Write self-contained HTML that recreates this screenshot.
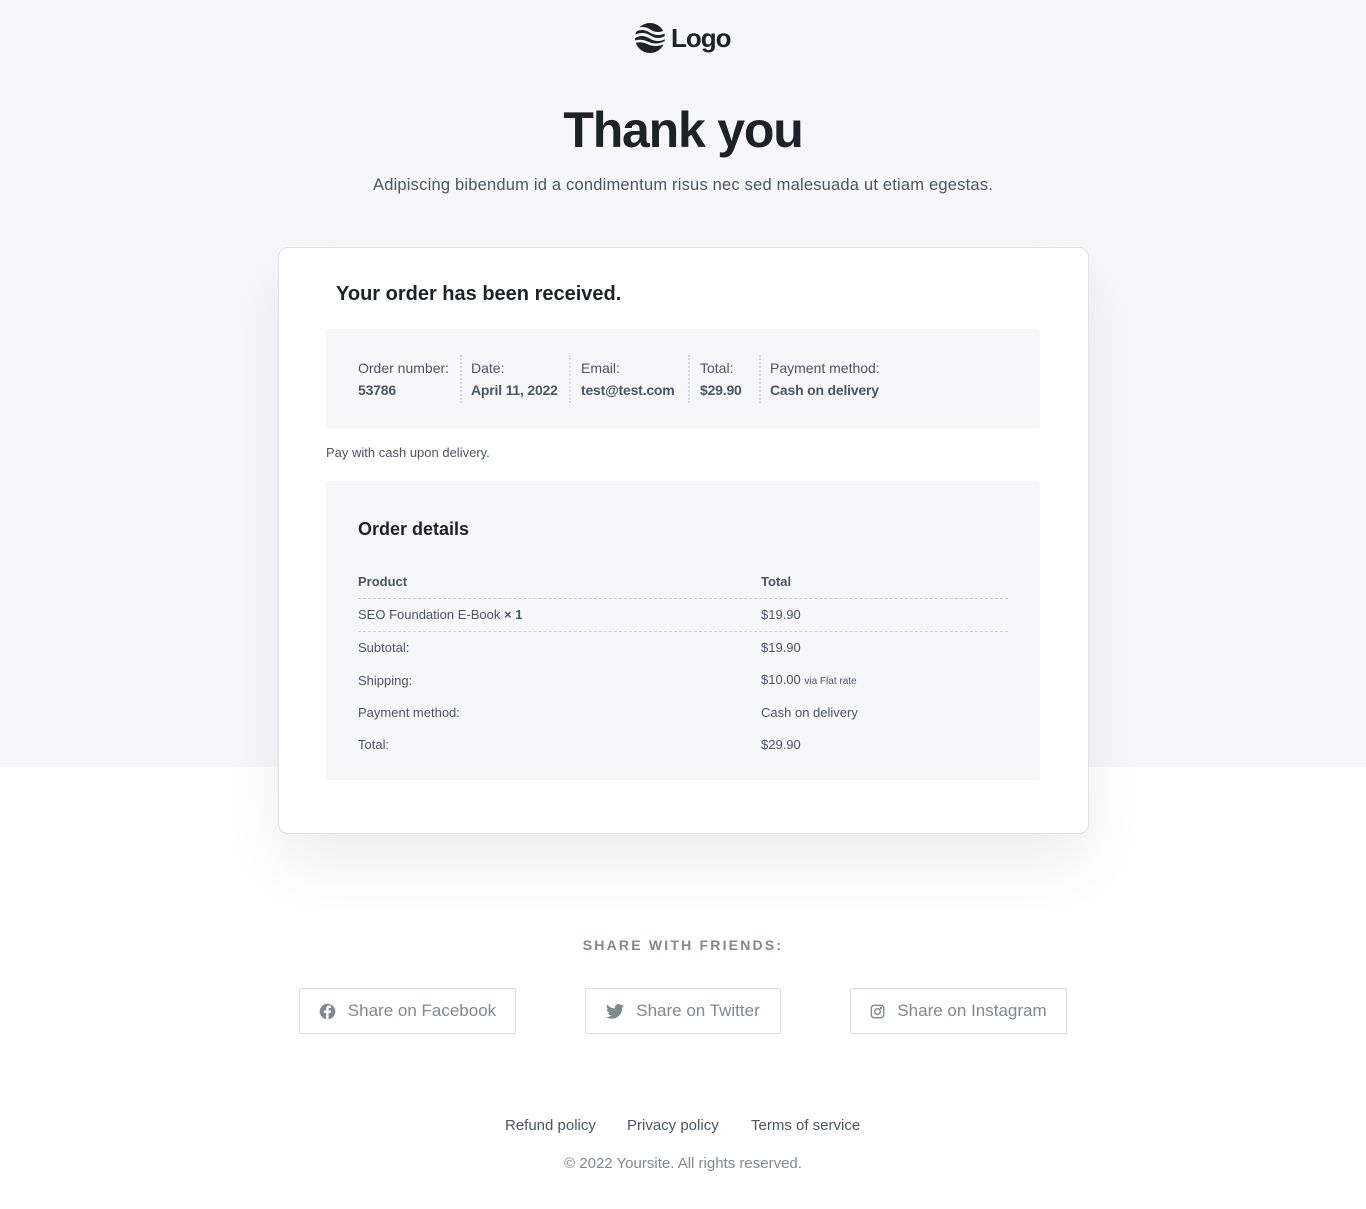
<!DOCTYPE html>
<html><head><meta charset="utf-8"><style>
*{margin:0;padding:0;box-sizing:border-box}
body{width:1366px;height:1209px;position:relative;background:#fff;font-family:"Liberation Sans",sans-serif;color:#4a5568;overflow:hidden}
.bg{position:absolute;left:0;top:0;width:1366px;height:767px;background:#f7f6f8}
.a{position:absolute;white-space:nowrap}
.card{position:absolute;left:278px;top:247px;width:811px;height:587px;background:#fff;border:1px solid #e2e2e6;border-radius:10px;box-shadow:0 30px 60px rgba(0,0,0,.07)}
.box{position:absolute;background:#f7f6f8;border-radius:3px}
.lbl{font-size:14px;color:#4a5568}
.val{font-size:14px;font-weight:bold;color:#4a5568;letter-spacing:-0.2px}
.sep{position:absolute;top:355px;height:48px;border-left:2px dotted #d8d8de}
.t{font-size:13px;color:#4a5568}
.dash{position:absolute;left:358px;width:650px;border-top:1px dashed #cfcfd6}
.btn{position:absolute;top:988px;height:46px;border:1px solid #dcdde0;border-radius:2px;background:#fff;color:#7d8a8f;font-size:17px;display:flex;align-items:center;justify-content:center;gap:12px}
.lnk{font-size:15px;color:#4a5568}
</style></head><body>
<div class="bg"></div>
<div class="a" style="left:634px;top:22px;width:100px;height:32px">
<svg width="32" height="32" viewBox="0 0 32 32" style="position:absolute;left:0;top:0"><circle cx="16" cy="16" r="15" fill="#1e2228"/><path d="M0 9 q8-5 16 0 t16 0 M0 15 q8-5 16 0 t16 0" stroke="#f7f6f8" stroke-width="3" fill="none"/><path d="M-2 21 q8-4 16 0 t18 -1" stroke="#f7f6f8" stroke-width="2.5" fill="none"/></svg>
<span style="position:absolute;left:37px;top:1px;font-size:26px;font-weight:bold;color:#1e2228;letter-spacing:-1px">Logo</span></div>
<div class="a" style="left:0;width:1366px;text-align:center;top:101px;font-size:50px;font-weight:bold;color:#1e2228;letter-spacing:-1.2px">Thank you</div>
<div class="a" style="left:0;width:1366px;text-align:center;top:176px;font-size:16.5px;letter-spacing:0.2px;color:#4a5568">Adipiscing bibendum id a condimentum risus nec sed malesuada ut etiam egestas.</div>
<div class="card"></div>
<div class="a" style="left:336px;top:283px;font-size:20px;font-weight:bold;color:#1e2228">Your order has been received.</div>
<div class="box" style="left:326px;top:329px;width:714px;height:100px"></div>
<div class="a lbl" style="left:358px;top:360px">Order number:</div><div class="a val" style="left:358px;top:382px">53786</div>
<div class="sep" style="left:460px"></div>
<div class="a lbl" style="left:471px;top:360px">Date:</div><div class="a val" style="left:471px;top:382px">April 11, 2022</div>
<div class="sep" style="left:569px"></div>
<div class="a lbl" style="left:581px;top:360px">Email:</div><div class="a val" style="left:581px;top:382px">test@test.com</div>
<div class="sep" style="left:688px"></div>
<div class="a lbl" style="left:700px;top:360px">Total:</div><div class="a val" style="left:700px;top:382px">$29.90</div>
<div class="sep" style="left:759px"></div>
<div class="a lbl" style="left:770px;top:360px">Payment method:</div><div class="a val" style="left:770px;top:382px">Cash on delivery</div>
<div class="a t" style="left:326px;top:445px">Pay with cash upon delivery.</div>
<div class="box" style="left:326px;top:481px;width:714px;height:299px"></div>
<div class="a" style="left:358px;top:519px;font-size:18px;font-weight:bold;color:#1e2228">Order details</div>
<div class="a t" style="left:358px;top:574px;font-weight:bold">Product</div><div class="a t" style="left:761px;top:574px;font-weight:bold">Total</div>
<div class="dash" style="top:598px"></div>
<div class="a t" style="left:358px;top:607px">SEO Foundation E-Book <b>× 1</b></div><div class="a t" style="left:761px;top:607px">$19.90</div>
<div class="dash" style="top:631px"></div>
<div class="a t" style="left:358px;top:640px">Subtotal:</div><div class="a t" style="left:761px;top:640px">$19.90</div>
<div class="a t" style="left:358px;top:673px">Shipping:</div><div class="a t" style="left:761px;top:672px">$10.00 <span style="font-size:10px">via Flat rate</span></div>
<div class="a t" style="left:358px;top:705px">Payment method:</div><div class="a t" style="left:761px;top:705px">Cash on delivery</div>
<div class="a t" style="left:358px;top:737px">Total:</div><div class="a t" style="left:761px;top:737px">$29.90</div>
<div class="a" style="left:0;width:1366px;text-align:center;top:937px;font-size:14px;font-weight:bold;letter-spacing:2.2px;color:#7d8a8f">SHARE WITH FRIENDS:</div>
<div class="btn" style="left:299px;width:217px"><svg width="17" height="17" viewBox="0 0 24 24"><circle cx="12" cy="12" r="11" fill="#7d8a8f"/><path d="M13.5 23V14h3l.5-3.5h-3.5V8.5c0-1 .3-1.7 1.8-1.7H17V3.7c-.3 0-1.4-.2-2.6-.2-2.6 0-4.3 1.6-4.3 4.4v2.6H7V14h3.1v9z" fill="#fff"/></svg>Share on Facebook</div>
<div class="btn" style="left:585px;width:196px"><svg width="18" height="15" viewBox="0 0 24 20"><path d="M24 2.4c-.9.4-1.8.7-2.8.8 1-.6 1.8-1.6 2.200-2.7-1 .6-2 1-3.1 1.2C19.3.7 18 0 16.6 0c-2.7 0-4.9 2.2-4.9 4.9 0 .4 0 .8.1 1.1C7.7 5.8 4.1 3.9 1.7.9c-.4.7-.7 1.6-.7 2.5 0 1.7.9 3.2 2.2 4.1-.8 0-1.6-.2-2.2-.6v.1c0 2.4 1.7 4.4 3.9 4.8-.4.1-.8.2-1.3.2-.3 0-.6 0-.9-.1.6 2 2.4 3.4 4.6 3.4-1.7 1.3-3.8 2.1-6.1 2.1-.4 0-.8 0-1.2-.1C2.2 18.8 4.8 19.6 7.5 19.6c9.1 0 14-7.5 14-14v-.6c1-.7 1.8-1.600 2.5-2.6z" fill="#7d8a8f"/></svg>Share on Twitter</div>
<div class="btn" style="left:850px;width:217px"><svg width="15" height="15" viewBox="0 0 24 24" fill="none" stroke="#7d8a8f" stroke-width="2.2"><rect x="2" y="2" width="20" height="20" rx="5"/><circle cx="12" cy="12" r="4.5"/><circle cx="17.5" cy="6.5" r=".8" fill="#7d8a8f"/></svg>Share on Instagram</div>
<div class="a lnk" style="left:505px;top:1117px">Refund policy</div>
<div class="a lnk" style="left:627px;top:1117px">Privacy policy</div>
<div class="a lnk" style="left:751px;top:1117px">Terms of service</div>
<div class="a" style="left:0;width:1366px;text-align:center;top:1155px;font-size:15px;color:#7d8a8f">© 2022 Yoursite. All rights reserved.</div>
</body></html>
